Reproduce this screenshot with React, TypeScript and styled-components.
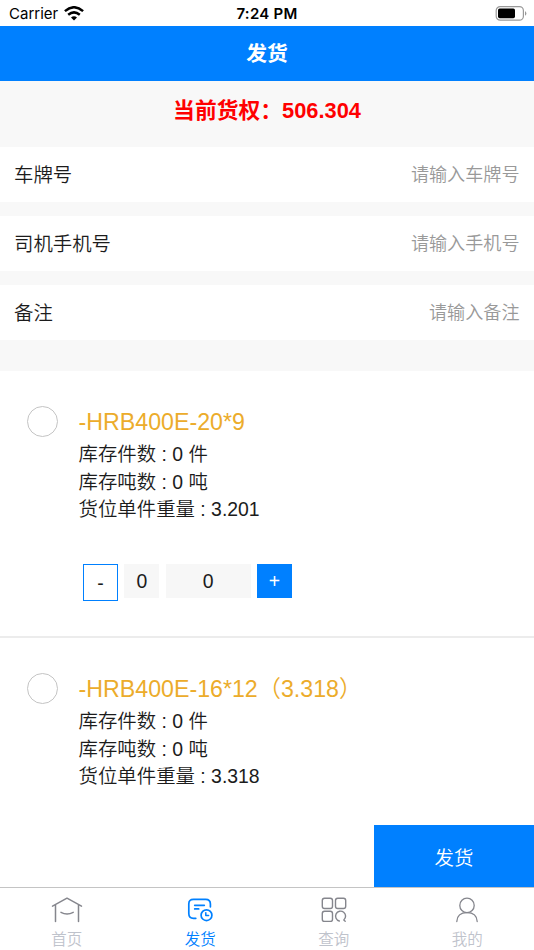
import React from "react";
import styled, { createGlobalStyle } from "styled-components";

const BLUE = "#0080ff";

const GlobalStyle = createGlobalStyle`
  * { box-sizing: border-box; }
  body { margin: 0; background: #fff; }
  button, input { font: inherit; border: 0; padding: 0; margin: 0; }
`;

const Screen = styled.div`
  width: 534px;
  height: 950px;
  display: flex;
  flex-direction: column;
  overflow: hidden;
  background: #fff;
  color: #1c1c1c;
  font-family: "Liberation Sans", "Noto Sans CJK SC", sans-serif;
  font-weight: 350;
  font-size: 19.4px;
`;

const StatusBar = styled.div`
  flex: none;
  height: 26px;
  display: grid;
  grid-template-columns: 1fr auto 1fr;
  align-items: center;
  padding: 2px 7px 0 9px;
  font: 400 15px/24px Inter, sans-serif;
  color: #000;
`;

const Carrier = styled.div`
  display: flex;
  align-items: center;
  gap: 6px;
`;

const Clock = styled.div`
  margin-right: 2px;
  font-weight: 600;
  letter-spacing: 0.25px;
`;

const BatterySlot = styled.div`
  display: flex;
  justify-content: flex-end;
`;

const Header = styled.h1`
  flex: none;
  height: 55px;
  margin: 0;
  background: ${BLUE};
  color: #fff;
  font-size: 20.8px;
  font-weight: 700;
  line-height: 56px;
  text-align: center;
`;

const Form = styled.section`
  flex: none;
  height: 290px;
  background: #f8f8f8;
`;

const Balance = styled.div`
  height: 66px;
  color: #f00;
  font-size: 21.8px;
  font-weight: 700;
  line-height: 59px;
  text-align: center;
`;

const Field = styled.label`
  display: flex;
  align-items: center;
  height: 55px;
  margin-bottom: 14px;
  padding: 0 14.5px 0 14px;
  background: #fff;
`;

const FieldName = styled.span`
  flex: none;
  padding-top: 2px;
  line-height: 55px;
`;

const FieldInput = styled.input`
  flex: 1;
  min-width: 0;
  height: 55px;
  padding-top: 2px;
  background: transparent;
  font-size: 18.1px;
  text-align: right;
  outline: none;
  &::placeholder { color: #999; opacity: 1; }
`;

const List = styled.main`
  flex: 1;
  min-height: 0;
  overflow: hidden;
`;

const Item = styled.article`
  display: flex;
  height: 267px;
  padding: 35px 27px 0;
  border-bottom: 2px solid #ececec;
`;

const Radio = styled.span`
  flex: none;
  width: 31px;
  height: 31px;
  margin-right: 20.6px;
  border: 1px solid #c4c4c4;
  border-radius: 50%;
`;

const ItemName = styled.h2`
  margin: 0;
  height: 35px;
  color: #ecac2b;
  font-size: 23.2px;
  font-weight: 350;
  line-height: 33px;
  white-space: nowrap;
`;

const Fact = styled.div`
  height: 27.6px;
  line-height: 27.6px;
  white-space: nowrap;
`;

const Stepper = styled.div`
  display: flex;
  align-items: flex-start;
  gap: 6.3px;
  margin: 40px 0 0 4.4px;
`;

const StepButton = styled.button<{ $filled?: boolean }>`
  width: 35px;
  height: ${(p) => (p.$filled ? 34 : 37)}px;
  padding-top: 2px;
  border: ${(p) => (p.$filled ? "0" : `1px solid ${BLUE}`)};
  background: ${(p) => (p.$filled ? BLUE : "#fff")};
  color: ${(p) => (p.$filled ? "#fff" : "#1c1c1c")};
`;

const StepValue = styled.div<{ $wide?: boolean }>`
  width: ${(p) => (p.$wide ? 85 : 35)}px;
  height: 34px;
  background: #f7f7f7;
  line-height: 35px;
  text-align: center;
`;

const ActionBar = styled.div`
  flex: none;
  display: flex;
  justify-content: flex-end;
  height: 62px;
`;

const SubmitButton = styled.button`
  width: 160px;
  background: ${BLUE};
  color: #fff;
  font-size: 19.4px;
`;

const TabBar = styled.nav`
  flex: none;
  display: grid;
  grid-template-columns: repeat(4, 1fr);
  height: 63px;
  border-top: 1px solid #c4c4c4;
`;

const Tab = styled.a<{ $active?: boolean }>`
  display: flex;
  flex-direction: column;
  align-items: center;
  padding-top: 6px;
  color: ${(p) => (p.$active ? BLUE : "#bfc3cc")};
  font-size: 15.5px;
  line-height: 22px;
`;

const TabIcon = styled.svg`
  width: 32px;
  height: 32px;
  margin-bottom: 3px;
  fill: none;
  stroke-linecap: round;
  stroke-linejoin: round;
`;

function WifiIcon() {
  return (
    <svg width="20" height="16" viewBox="0 0 20 16" fill="none" stroke="#000" strokeWidth="2.5">
      <path d="M.9 5.1Q10-2.6 19.1 5.1" />
      <path d="M4.2 8.7Q10 4 15.8 8.7" />
      <path d="M7 11.4Q10 9 13 11.4L10 14.4Z" fill="#000" stroke="none" />
    </svg>
  );
}

function BatteryIcon() {
  return (
    <svg width="32" height="16" viewBox="0 0 32 16">
      <rect x="1.2" y=".6" width="27.2" height="13.6" rx="4" fill="none" stroke="#999" strokeWidth="1.2" />
      <rect x="3" y="2.6" width="17" height="9.6" rx="1.7" fill="#000" />
      <path d="M30 5Q32.8 7.4 30 9.8Z" fill="#999" />
    </svg>
  );
}

const tabs = [
  {
    name: "首页",
    icon: (
      <TabIcon viewBox="0 0 32 32" stroke="#85868d" strokeWidth="1.5">
        <path d="M1.5 12.2 16 4.2l14.5 8M4.5 11v16.5M27.5 11v16.5M10 18.4q6 3.2 12.2 0" />
      </TabIcon>
    ),
  },
  {
    name: "发货",
    active: true,
    icon: (
      <TabIcon viewBox="0 0 32 32" stroke={BLUE} strokeWidth="1.7">
        <path d="M11.8 24.3H9.5Q4.8 24.3 4.8 19.6V10Q4.8 5.3 9.5 5.3h12.2q4.7 0 4.7 4.7v2.8M10.7 11.3h9.6M10.7 14.9h4" />
        <circle cx="22.5" cy="21.2" r="5.4" />
        <path d="M21.8 18.8v2.7h2.8" strokeWidth="1.5" />
      </TabIcon>
    ),
  },
  {
    name: "查询",
    icon: (
      <TabIcon viewBox="0 0 32 32" stroke="#85868d" strokeWidth="1.4">
        <rect x="4.3" y="4.3" width="10.2" height="10.2" rx="2.2" />
        <rect x="17.5" y="4.3" width="10.2" height="10.2" rx="2.2" />
        <rect x="4.3" y="17.2" width="10.2" height="10.2" rx="2.2" />
        <path d="M21.3 27A5 5 0 1 1 25.8 26L27.2 27.2" />
      </TabIcon>
    ),
  },
  {
    name: "我的",
    icon: (
      <TabIcon viewBox="0 0 32 32" stroke="#85868d" strokeWidth="1.3">
        <circle cx="16" cy="11.4" r="7.2" />
        <path d="M5.8 27.5Q6.2 18.6 16 18.6t10.2 8.9" />
      </TabIcon>
    ),
  },
];

const fields = [
  ["车牌号", "请输入车牌号"],
  ["司机手机号", "请输入手机号"],
  ["备注", "请输入备注"],
];

const goods = [
  { name: "-HRB400E-20*9", weight: "3.201", adjustable: true },
  { name: "-HRB400E-16*12（3.318）", weight: "3.318", adjustable: false },
];

export default function App() {
  return (
    <>
      <GlobalStyle />
      <Screen>
        <StatusBar>
          <Carrier>
            Carrier
            <WifiIcon />
          </Carrier>
          <Clock>7:24 PM</Clock>
          <BatterySlot>
            <BatteryIcon />
          </BatterySlot>
        </StatusBar>
        <Header>发货</Header>
        <Form>
          <Balance>当前货权：506.304</Balance>
          {fields.map(([name, hint]) => (
            <Field key={name}>
              <FieldName>{name}</FieldName>
              <FieldInput placeholder={hint} />
            </Field>
          ))}
        </Form>
        <List>
          {goods.map((item) => (
            <Item key={item.name}>
              <Radio />
              <div>
                <ItemName>{item.name}</ItemName>
                <Fact>库存件数 : 0 件</Fact>
                <Fact>库存吨数 : 0 吨</Fact>
                <Fact>货位单件重量 : {item.weight}</Fact>
                {item.adjustable && (
                  <Stepper>
                    <StepButton>-</StepButton>
                    <StepValue>0</StepValue>
                    <StepValue $wide>0</StepValue>
                    <StepButton $filled>+</StepButton>
                  </Stepper>
                )}
              </div>
            </Item>
          ))}
        </List>
        <ActionBar>
          <SubmitButton>发货</SubmitButton>
        </ActionBar>
        <TabBar>
          {tabs.map((tab) => (
            <Tab key={tab.name} $active={tab.active}>
              {tab.icon}
              {tab.name}
            </Tab>
          ))}
        </TabBar>
      </Screen>
    </>
  );
}
